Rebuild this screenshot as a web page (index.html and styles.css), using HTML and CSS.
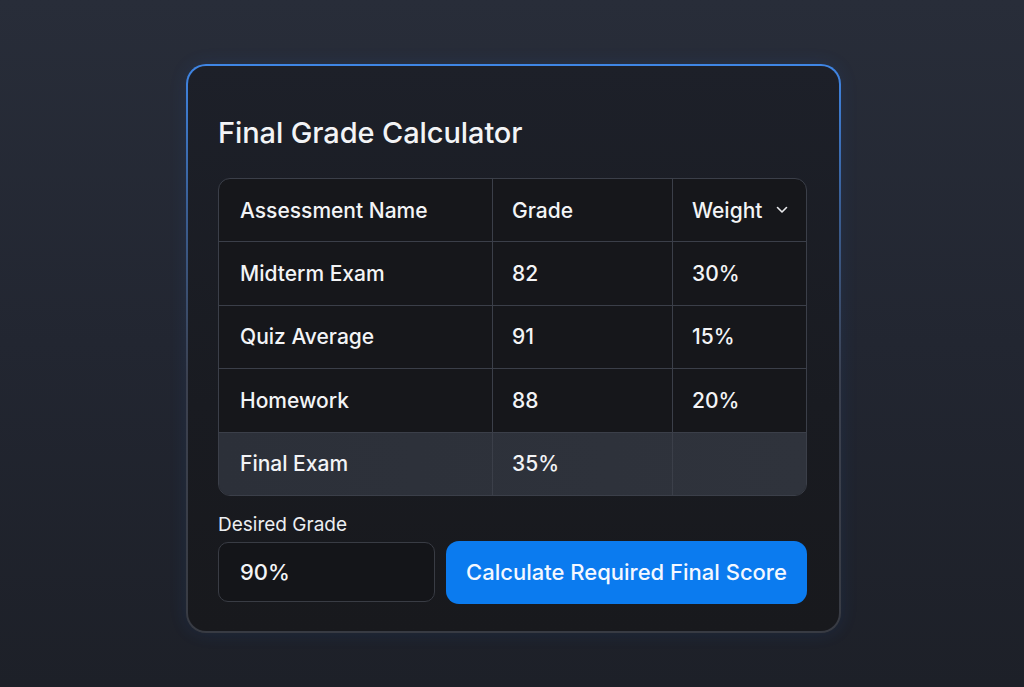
FILE: index.html
```html
<!DOCTYPE html>
<html lang="en">
<head>
    <meta charset="UTF-8">
    <meta name="viewport" content="width=device-width, initial-scale=1.0">
    <title>Final Grade Calculator</title>
    <link rel="stylesheet" href="styles.css">
</head>
<body>
    <div class="card">
        <h1>Final Grade Calculator</h1>
        <div class="grade-table">
            <div class="row head">
                <div class="cell">Assessment Name</div>
                <div class="cell">Grade</div>
                <div class="cell">Weight
                    <svg class="chevron" viewBox="0 0 12 8" width="12" height="8"><path d="M1.5 1.5 L6 6 L10.5 1.5" fill="none" stroke="#e8e9ec" stroke-width="1.6" stroke-linecap="round" stroke-linejoin="round"/></svg>
                </div>
            </div>
            <div class="row">
                <div class="cell">Midterm Exam</div>
                <div class="cell">82</div>
                <div class="cell">30%</div>
            </div>
            <div class="row">
                <div class="cell">Quiz Average</div>
                <div class="cell">91</div>
                <div class="cell">15%</div>
            </div>
            <div class="row">
                <div class="cell">Homework</div>
                <div class="cell">88</div>
                <div class="cell">20%</div>
            </div>
            <div class="row final">
                <div class="cell">Final Exam</div>
                <div class="cell">35%</div>
                <div class="cell"></div>
            </div>
        </div>
        <label for="desired">Desired Grade</label>
        <div class="actions">
            <input type="text" id="desired" value="90%">
            <button>Calculate Required Final Score</button>
        </div>
    </div>
</body>
</html>
```

FILE: styles.css
```css
body {
    margin: 0;
    height: 687px;
    font-family: Inter, "Noto Sans", sans-serif;
    background: linear-gradient(180deg, #282d39 0%, #222631 50%, #1d2028 100%);
    display: flex;
    justify-content: center;
    padding-top: 64px;
    box-sizing: border-box;
    color: #f3f4f6;
    overflow: hidden;
}

.card {
    width: 655px;
    height: 569px;
    box-sizing: border-box;
    margin-left: 3px;
    padding: 49px 32px 0 30px;
    border: 2px solid transparent;
    border-radius: 20px;
    background:
        linear-gradient(180deg, #1d2029 0%, #191b21 60%, #18191d 100%) padding-box,
        linear-gradient(180deg, #3f86e6 0%, #3a5f95 25%, #3b4150 55%, #383b43 100%) border-box;
    box-shadow: 0 0 18px rgba(40, 110, 220, 0.12);
}

h1 {
    margin: 0 0 27px;
    font-size: 29px;
    line-height: 36px;
    font-weight: 500;
    letter-spacing: -0.1px;
}

.grade-table {
    border: 1px solid #3b3f49;
    border-radius: 12px;
    overflow: hidden;
    background: #16171b;
}

.row {
    display: grid;
    grid-template-columns: 273px 180px 1fr;
    height: 62.4px;
    border-top: 1px solid #3b3f49;
}

.row.head {
    border-top: none;
}

.row.final {
    background: linear-gradient(90deg, #2c3039, #2f333c);
}

.cell {
    display: flex;
    align-items: center;
    padding-left: 19px;
    font-size: 21px;
    font-weight: 500;
    border-left: 1px solid #3b3f49;
}

.cell:first-child {
    border-left: none;
    padding-left: 21px;
}

.chevron {
    margin-left: 14px;
}

label {
    display: block;
    margin: 17px 0 4px;
    font-size: 19px;
    line-height: 24px;
    color: #eceef1;
}

.actions {
    display: flex;
    gap: 11px;
    align-items: center;
}

input {
    width: 217px;
    height: 60px;
    box-sizing: border-box;
    padding: 0 21px;
    border: 1px solid #393c44;
    border-radius: 10px;
    background: #141519;
    color: #f3f4f6;
    font-family: inherit;
    font-size: 22px;
    font-weight: 500;
    outline: none;
}

button {
    flex: 1;
    height: 63px;
    border: none;
    border-radius: 13px;
    background: #0b7bef;
    color: #f4f8ff;
    font-family: inherit;
    font-size: 22px;
    font-weight: 500;
    cursor: pointer;
}
```
